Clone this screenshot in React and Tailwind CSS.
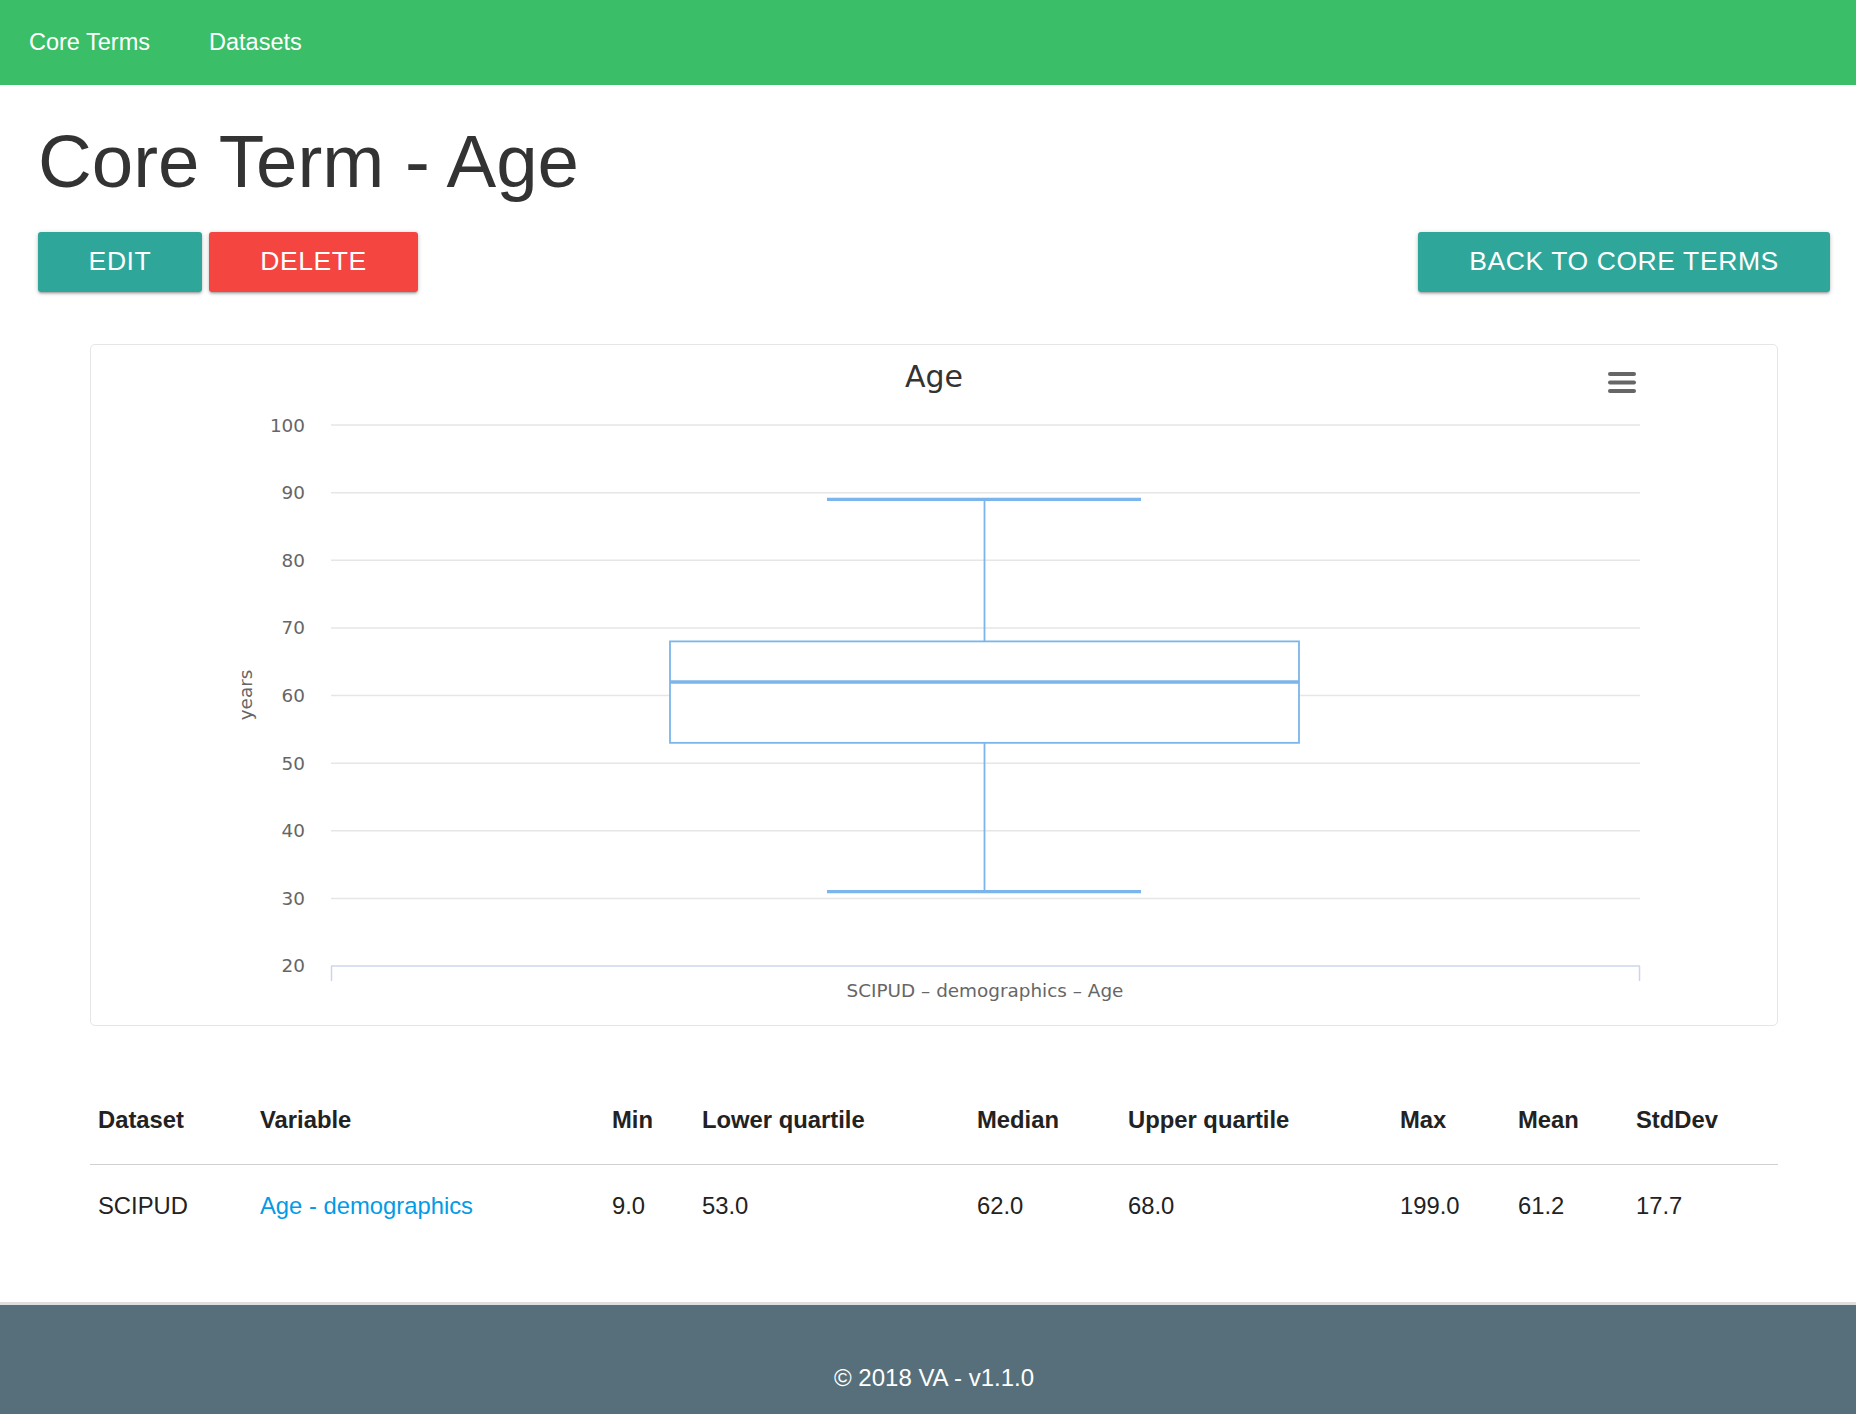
import React from "react";

const gridVals = [100, 90, 80, 70, 60, 50, 40, 30];
const yOf = (v) => 80 + (100 - v) * 6.7625;

function BoxChart() {
  const font = "'DejaVu Sans', 'Liberation Sans', sans-serif";
  return (
    <svg width="1686" height="680" viewBox="0 0 1686 680" className="block">
      {/* title */}
      <text x="843" y="42" textAnchor="middle" fontFamily={font} fontSize="30" fill="#333333">Age</text>
      {/* context menu */}
      <g stroke="#666666" strokeWidth="4" strokeLinecap="round">
        <line x1="1519" y1="29" x2="1543" y2="29" />
        <line x1="1519" y1="37.5" x2="1543" y2="37.5" />
        <line x1="1519" y1="46" x2="1543" y2="46" />
      </g>
      {/* grid */}
      {gridVals.map((v) => (
        <g key={v}>
          <line x1="240" x2="1549" y1={yOf(v)} y2={yOf(v)} stroke="#e6e6e6" strokeWidth="1.5" />
          <text x="214" y={yOf(v) + 6.5} textAnchor="end" fontFamily={font} fontSize="18.4" fill="#666666">{v}</text>
        </g>
      ))}
      <text x="214" y={yOf(20) + 5.5} textAnchor="end" fontFamily={font} fontSize="18.4" fill="#666666">20</text>
      {/* x axis */}
      <line x1="240" x2="1549" y1={yOf(20)} y2={yOf(20)} stroke="#ccd6eb" strokeWidth="1.5" />
      <line x1="240.5" x2="240.5" y1={yOf(20)} y2={yOf(20) + 15} stroke="#ccd6eb" strokeWidth="1.5" />
      <line x1="1548.5" x2="1548.5" y1={yOf(20)} y2={yOf(20) + 15} stroke="#ccd6eb" strokeWidth="1.5" />
      <text x="894" y="652" textAnchor="middle" fontFamily={font} fontSize="18.4" fill="#666666">SCIPUD – demographics – Age</text>
      {/* y axis title */}
      <text x="0" y="0" transform="translate(161 350) rotate(-90)" textAnchor="middle" fontFamily={font} fontSize="18.4" fill="#666666">years</text>
      {/* box plot */}
      <g stroke="#7cb5ec" fill="none">
        <line x1="893.5" x2="893.5" y1={yOf(89)} y2={yOf(68)} strokeWidth="1.8" />
        <line x1="893.5" x2="893.5" y1={yOf(53)} y2={yOf(31)} strokeWidth="1.8" />
        <rect x="579" y={yOf(68)} width="629" height={yOf(53) - yOf(68)} fill="#ffffff" strokeWidth="1.8" />
        <line x1="579" x2="1208" y1={yOf(62)} y2={yOf(62)} strokeWidth="3.3" />
        <line x1="736" x2="1050" y1={yOf(89)} y2={yOf(89)} strokeWidth="3.3" />
        <line x1="736" x2="1050" y1={yOf(31)} y2={yOf(31)} strokeWidth="3.3" />
      </g>
    </svg>
  );
}

const cols = [
  ["Dataset", "SCIPUD"],
  ["Variable", "Age - demographics"],
  ["Min", "9.0"],
  ["Lower quartile", "53.0"],
  ["Median", "62.0"],
  ["Upper quartile", "68.0"],
  ["Max", "199.0"],
  ["Mean", "61.2"],
  ["StdDev", "17.7"],
];

export default function App() {
  const btnShadow =
    "shadow-[0_2px_2px_0_rgba(0,0,0,0.14),0_3px_1px_-2px_rgba(0,0,0,0.12),0_1px_5px_0_rgba(0,0,0,0.2)]";
  return (
    <div className="min-h-[1414px] bg-white font-['Liberation_Sans',Arial,sans-serif] text-[#333333]">
      <nav className="h-[85px] bg-[#3abe67] flex items-center pl-[29px] gap-[59px] text-white text-[23.5px]">
        <span>Core Terms</span>
        <span>Datasets</span>
      </nav>

      <main className="pl-[38px] pr-[26px]">
        <h1 className="mt-[37px] text-[74.5px] leading-[79px] text-[#333333]">Core Term - Age</h1>

        <div className="mt-[31px] flex justify-between">
          <div className="flex gap-[7px]">
            <button className={`h-[60px] w-[164px] rounded-[3px] bg-[#2fa69a] text-white text-[26.5px] tracking-[0.6px] ${btnShadow}`}>
              EDIT
            </button>
            <button className={`h-[60px] w-[209px] rounded-[3px] bg-[#f44540] text-white text-[26.5px] tracking-[0.6px] ${btnShadow}`}>
              DELETE
            </button>
          </div>
          <button className={`h-[60px] w-[412px] rounded-[3px] bg-[#2fa69a] text-white text-[26.5px] tracking-[0.6px] ${btnShadow}`}>
            BACK TO CORE TERMS
          </button>
        </div>

        <div className="mt-[52px] mx-[52px] h-[682px] border border-[#e6e6e6] rounded-[5px] overflow-hidden">
          <BoxChart />
        </div>

        <div className="mt-[49px] mx-[52px] text-[23.8px] text-[#222222]">
          <div className="grid grid-cols-[162px_352px_90px_275px_151px_272px_118px_118px_150px] border-b border-[#d0d0d0]">
            {cols.map(([h]) => (
              <div key={h} className="pl-[8px] py-[27px] leading-[35px] font-bold">{h}</div>
            ))}
          </div>
          <div className="grid grid-cols-[162px_352px_90px_275px_151px_272px_118px_118px_150px]">
            {cols.map(([h, v]) => (
              <div key={h} className={`pl-[8px] py-[23px] leading-[35px] ${h === "Variable" ? "text-[#039be5]" : ""}`}>{v}</div>
            ))}
          </div>
        </div>
      </main>

      <footer className="mt-[56px] border-t-[3px] border-[#dedede] bg-[#566f7b] pl-[38px] pr-[26px] pt-[55px] pb-[80px] text-center text-white text-[24px] leading-[35px]">
        © 2018 VA - v1.1.0
      </footer>
    </div>
  );
}
